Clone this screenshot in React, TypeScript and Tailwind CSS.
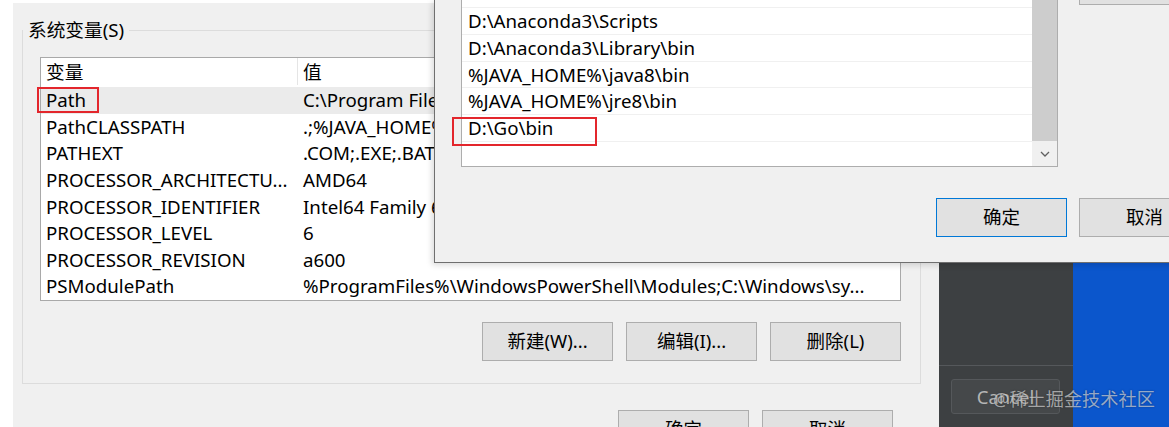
import React from "react";

const font = "font-['Noto_Sans','Noto_Sans_CJK_SC',sans-serif]";

const variables: [string, string][] = [
  ["Path", "C:\\Program Files (x86)\\Common Files\\Oracle\\Java\\javapath;C:\\Windows\\system32"],
  ["PathCLASSPATH", " .;%JAVA_HOME%\\lib\\dt.jar;%JAVA_HOME%\\lib\\tools.jar;"],
  ["PATHEXT", ".COM;.EXE;.BAT;.CMD;.VBS;.VBE;.JS;.JSE;.WSF;.WSH;.MSC"],
  ["PROCESSOR_ARCHITECTU...", "AMD64"],
  ["PROCESSOR_IDENTIFIER", "Intel64 Family 6 Model 158 Stepping 10, GenuineIntel"],
  ["PROCESSOR_LEVEL", "6"],
  ["PROCESSOR_REVISION", "a600"],
  ["PSModulePath", "%ProgramFiles%\\WindowsPowerShell\\Modules;C:\\Windows\\sy..."],
];

const paths = [
  "D:\\Anaconda3\\Library\\mingw-w64\\bin",
  "D:\\Anaconda3\\Library\\usr\\bin",
  "D:\\Anaconda3\\Scripts",
  "D:\\Anaconda3\\Library\\bin",
  "%JAVA_HOME%\\java8\\bin",
  "%JAVA_HOME%\\jre8\\bin",
  "D:\\Go\\bin",
];

function Chevron() {
  return (
    <svg width="10" height="6" viewBox="0 0 10 6" fill="none">
      <polyline points="1,1 5,5 9,1" stroke="#606060" strokeWidth="1.3" />
    </svg>
  );
}

function WinButton({ label, primary }: { label: string; primary?: boolean }) {
  return (
    <button
      className={
        "flex h-[39px] w-[131px] shrink-0 items-center justify-center border bg-[#e1e1e1] text-[18.5px] leading-none text-black " +
        (primary ? "border-[#0078d7]" : "border-[#adadad]")
      }
    >
      {label}
    </button>
  );
}

function VariableList() {
  return (
    <div className="flex h-[244px] w-[861px] border border-[#a9a9a9] bg-white">
      <div className="flex-1">
        {/* header */}
        <div className="flex h-[29px] items-center text-[18.7px]">
          <div className="w-[256px] pl-[5px]">变量</div>
          <div className="h-[27px] w-px self-start bg-[#e5e5e5]" />
          <div className="pl-[5px]">值</div>
        </div>
        {variables.map(([name, value], i) => (
          <div
            key={name}
            className={
              "flex h-[26.6px] items-center text-[18.7px] whitespace-nowrap " +
              (i === 0 ? "bg-[#ebebeb]" : "")
            }
          >
            <div className="relative flex h-full w-[257px] items-center pl-[5px]">
              {name}
              {i === 0 && (
                <span className="absolute left-[-4px] top-0 h-[26px] w-[62px] border-2 border-[#e3262c]" />
              )}
            </div>
            <div className="flex-1 overflow-hidden pl-[5px]">{value}</div>
          </div>
        ))}
      </div>
      <div className="flex w-[24px] flex-col justify-end bg-[#f0f0f0]">
        <div className="flex h-[26px] items-center justify-center">
          <Chevron />
        </div>
      </div>
    </div>
  );
}

function MainDialog() {
  return (
    <div className="mt-[3px] w-[926px] shrink-0 bg-[#f0f0f0]">
      <fieldset className="ml-[9px] mt-[14px] w-[898px] border border-[#dcdcdc]">
        <legend className="px-[5px] text-[18.7px] leading-[26px]">系统变量(S)</legend>
        <div className="pl-[17px] pr-[19px] pb-[22px]">
          <div className="mt-[14px]">
            <VariableList />
          </div>
          <div className="mt-[21px] flex justify-end gap-[13px]">
            <WinButton label="新建(W)..." />
            <WinButton label="编辑(I)..." />
            <WinButton label="删除(L)" />
          </div>
        </div>
      </fieldset>
      <div className="mt-[26px] flex justify-end gap-[13px] pr-[46px]">
        <WinButton label="确定" />
        <WinButton label="取消" />
      </div>
    </div>
  );
}

function DarkPanel() {
  return (
    <div className="w-[134px] shrink-0 bg-[#3d4042]">
      <div className="h-[366px] border-b border-[#55585b]" />
      <div className="ml-[12px] mt-[13px] flex h-[35px] w-[109px] items-center justify-center rounded-[3px] border border-[#55585b] bg-[#45484a] text-[18.5px] text-[#b5b5b5]">
        Cancel
      </div>
    </div>
  );
}

function EditDialog() {
  return (
    <div className="absolute left-[434px] top-0 h-[263px] w-[800px] border-b border-l border-[#6f6f6f] bg-[#f0f0f0] shadow-[-2px_2px_6px_rgba(0,0,0,0.15)]">
      <div className="-mt-[46px] flex pl-[26px]">
        <div className="flex h-[213px] w-[597px] border border-[#adadad] bg-white">
          <div className="flex-1">
            {paths.map((p, i) => (
              <div
                key={p}
                className="relative flex h-[26.7px] items-center border-b border-[#f0f0f0] pl-[6px] text-[18.7px] whitespace-nowrap"
              >
                <span className={i === 1 ? "-translate-y-[7px]" : ""}>{p}</span>
                {i === 6 && (
                  <span className="absolute left-[-10px] top-[2px] h-[29px] w-[145px] border-2 border-[#e3262c]" />
                )}
              </div>
            ))}
          </div>
          <div className="flex w-[25px] flex-col bg-[#f0f0f0]">
            <div className="h-[186px] bg-[#cdcdcd]" />
            <div className="flex flex-1 items-center justify-center">
              <Chevron />
            </div>
          </div>
        </div>
        <div className="ml-[21px] mt-[12px]">
          <WinButton label="新建(N)" />
        </div>
      </div>
      <div className="mt-[31px] flex justify-end gap-[12px] pr-[24px]">
        <WinButton label="确定" primary />
        <WinButton label="取消" />
      </div>
    </div>
  );
}

export default function App() {
  return (
    <div className={`relative h-[427px] w-[1169px] overflow-hidden bg-white text-black ${font}`}>
      <div className="flex h-full">
        <div className="w-[13px] shrink-0 bg-white" />
        <MainDialog />
        <DarkPanel />
        <div className="flex-1 bg-[#0b56cc]" />
      </div>
      <EditDialog />
      <span className="absolute left-[993px] top-[385px] text-[18.2px] leading-[28px] text-[rgba(215,215,215,0.7)] [text-shadow:0_0_2px_rgba(0,0,0,0.35)]">
        @稀土掘金技术社区
      </span>
    </div>
  );
}
